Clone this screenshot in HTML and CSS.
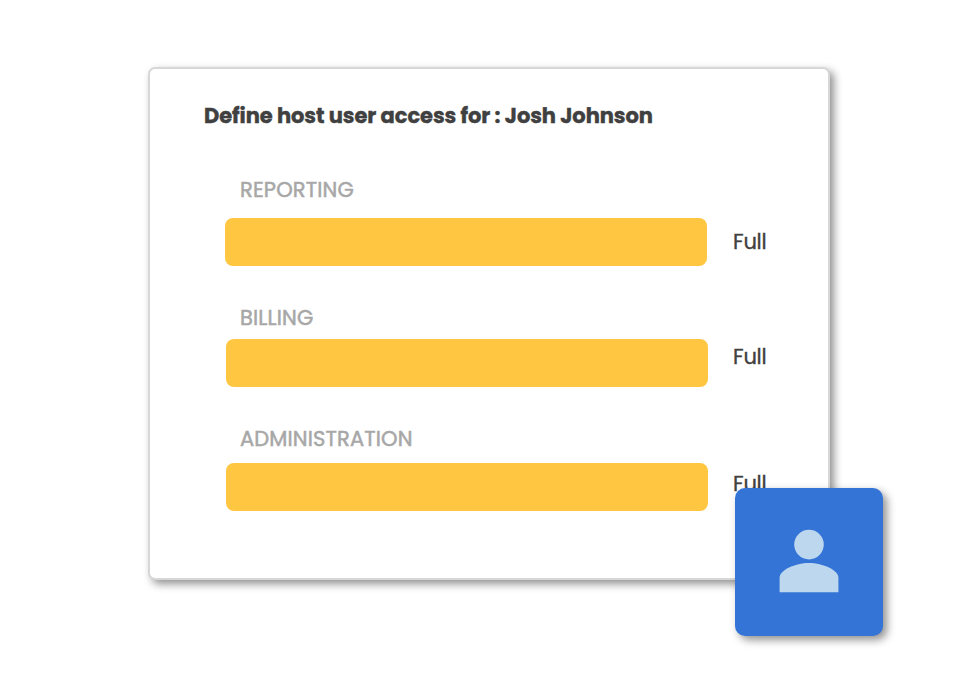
FILE: index.html
```html
<!DOCTYPE html>
<html lang="en">
<head>
<meta charset="utf-8">
<title>Host user access</title>
<link rel="stylesheet" href="styles.css">
</head>
<body>
<main class="card">
  <h1 class="title">Define host user access for : Josh Johnson</h1>
  <section class="access reporting">
    <h2 class="label">REPORTING</h2>
    <div class="row"><div class="bar"></div><span class="level">Full</span></div>
  </section>
  <section class="access billing">
    <h2 class="label">BILLING</h2>
    <div class="row"><div class="bar"></div><span class="level">Full</span></div>
  </section>
  <section class="access administration">
    <h2 class="label">ADMINISTRATION</h2>
    <div class="row"><div class="bar"></div><span class="level">Full</span></div>
  </section>
  <div class="badge">
    <svg viewBox="0 0 148 148" width="148" height="148" aria-hidden="true">
      <circle cx="74" cy="56.6" r="14.8"/>
      <path d="M44.6 104.3V89.5C44.6 82 60 74.9 74 74.9S103.4 82 103.4 89.5V104.3Z"/>
    </svg>
  </div>
</main>
</body>
</html>
```
FILE: styles.css
```css
* {
  box-sizing: border-box;
}

body {
  margin: 0;
  padding: 67px 0 0 148px;
  height: 682px;
  overflow: hidden;
  background: #fff;
  font-family: Poppins, Inter, sans-serif;
  color: #404040;
}

.card {
  position: relative;
  width: 682px;
  height: 513px;
  padding: 33px 0 0 54px;
  background: #fff;
  border: 2px solid #d7d7d7;
  border-radius: 7px;
  box-shadow: 4px 4px 8px rgba(0, 0, 0, 0.43);
}

.title {
  margin: 0 0 46px;
  font-size: 21px;
  line-height: 28px;
  font-weight: 700;
  letter-spacing: -0.08px;
  white-space: nowrap;
  -webkit-text-stroke: 0.4px #404040;
}

.access {
  margin: 0 0 38px 22px;
}

.reporting {
  margin-left: 21px;
}

.label {
  margin: 0 0 7px 14px;
  font-size: 21px;
  line-height: 28px;
  font-weight: 400;
  letter-spacing: 0.15px;
  color: #a7a7a7;
  -webkit-text-stroke: 0.5px #a7a7a7;
}

.reporting .label {
  margin-bottom: 14px;
  margin-left: 15px;
}

.administration .label {
  margin-bottom: 10px;
}

.row {
  display: flex;
  gap: 25px;
  align-items: flex-start;
}

.reporting .row {
  gap: 26px;
}

.bar {
  width: 482px;
  height: 48px;
  border-radius: 8px;
  background: #ffc641;
}

.level {
  margin-top: 4px;
  font-size: 21px;
  line-height: 28px;
  letter-spacing: -0.2px;
  -webkit-text-stroke: 0.35px #404040;
}

.reporting .level {
  margin-top: 10px;
}

.administration .level {
  margin-top: 7px;
}

.badge {
  position: absolute;
  left: 585px;
  top: 419px;
  width: 148px;
  height: 148px;
  border-radius: 10px;
  background: #3474d7;
  box-shadow: 4px 4px 8px rgba(0, 0, 0, 0.43);
}

.badge svg {
  display: block;
  fill: #bdd7ee;
}
```
